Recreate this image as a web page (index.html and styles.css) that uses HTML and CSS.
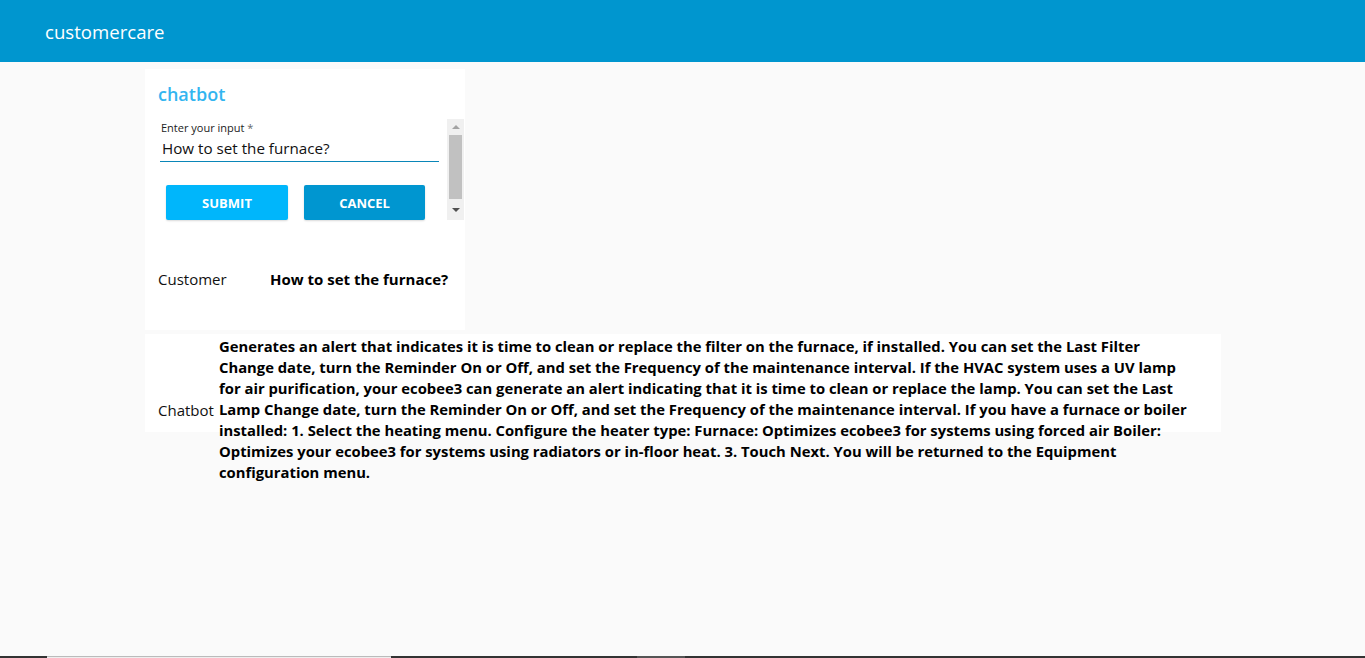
FILE: index.html
```html
<!DOCTYPE html>
<html lang="en">
<head>
<meta charset="utf-8">
<title>customercare</title>
<link rel="stylesheet" href="styles.css">
</head>
<body>
<header class="appbar"><span class="brand">customercare</span></header>
<main class="content">
  <section class="card">
    <h2 class="card-title">chatbot</h2>
    <div class="form-scroll">
      <div class="form-body">
        <label class="field-label">Enter your input <span class="req">*</span></label>
        <div class="field-input">How to set the furnace?</div>
        <div class="actions">
          <button class="btn btn-submit">SUBMIT</button>
          <button class="btn btn-cancel">CANCEL</button>
        </div>
      </div>
      <div class="scrollbar">
        <span class="arrow up"></span>
        <span class="thumb"></span>
        <span class="arrow down"></span>
      </div>
    </div>
    <div class="msg-row customer-row">
      <span class="who">Customer</span>
      <span class="msg">How to set the furnace?</span>
    </div>
  </section>
  <section class="bot-row">
    <div class="bot-inner">
      <span class="bot-who">Chatbot</span>
      <p class="bot-msg">Generates an alert that indicates it is time to clean or replace the filter on the furnace, if installed. You can set the Last Filter Change date, turn the Reminder On or Off, and set the Frequency of the maintenance interval. If the HVAC system uses a UV lamp for air purification, your ecobee3 can generate an alert indicating that it is time to clean or replace the lamp. You can set the Last Lamp Change date, turn the Reminder On or Off, and set the Frequency of the maintenance interval. If you have a furnace or boiler installed: 1. Select the heating menu. Configure the heater type: Furnace: Optimizes ecobee3 for systems using forced air Boiler: Optimizes your ecobee3 for systems using radiators or in-floor heat. 3. Touch Next. You will be returned to the Equipment configuration menu.</p>
    </div>
  </section>
</main>
<div class="screen-edge">
  <span class="seg dark s1"></span>
  <span class="seg light s2"></span>
  <span class="seg dark s3"></span>
  <span class="seg mid s4"></span>
  <span class="seg dark s5"></span>
</div>
</body>
</html>
```
FILE: styles.css
```css
* { box-sizing: border-box; }
html, body { margin: 0; padding: 0; }
body {
  background: #fafafa;
  font-family: "Open Sans", "Noto Sans", sans-serif;
  color: #000;
  height: 658px;
  overflow: hidden;
}
.appbar {
  height: 62px;
  background: #0096cf;
  display: flex;
  align-items: center;
  padding-left: 45px;
}
.brand {
  color: #fff;
  font-size: 18.6px;
  line-height: 22px;
  padding-top: 2px;
}
.content {
  padding: 7px 0 0 145px;
  display: flex;
  flex-direction: column;
  gap: 4px;
  align-items: flex-start;
}
.card {
  width: 320px;
  height: 261px;
  background: #fff;
  padding: 13px 0 0 0;
  display: flex;
  flex-direction: column;
}
.card-title {
  margin: 0 0 0 13px;
  font-size: 18px;
  line-height: 24px;
  font-weight: 600;
  color: #33b5f0;
}
.form-scroll {
  margin: 13px 0 0 15px;
  width: 304px;
  height: 101px;
  display: flex;
}
.form-body {
  flex: 1;
  padding-top: 2px;
}
.field-label {
  display: block;
  margin-left: 1px;
  font-size: 11px;
  line-height: 14px;
  color: #222;
}
.req { color: #666; }
.field-input {
  width: 279px;
  margin-top: 3px;
  padding-left: 2px;
  font-size: 15.2px;
  line-height: 20px;
  height: 24px;
  border-bottom: 1px solid #0a86b8;
  color: #111;
}
.actions {
  display: flex;
  gap: 16px;
  margin: 23px 0 0 6px;
}
.btn {
  height: 35px;
  border: 0;
  border-radius: 2px;
  color: #fff;
  font-family: inherit;
  font-weight: 700;
  font-size: 13px;
  letter-spacing: 0;
  box-shadow: 0 1px 2px rgba(0,0,0,0.15);
}
.btn-submit { width: 122px; background: #00b6fb; }
.btn-cancel { width: 121px; background: #0096d0; }
.scrollbar {
  width: 17px;
  background: #f0f0f0;
  display: flex;
  flex-direction: column;
  align-items: center;
}
.arrow {
  width: 0; height: 0;
  border-left: 4px solid transparent;
  border-right: 4px solid transparent;
}
.arrow.up { border-bottom: 4px solid #a3a3a3; margin: 6px 0 6px; }
.arrow.down { border-top: 4px solid #505050; margin: 9px 0 0; }
.thumb {
  width: 13px;
  height: 64px;
  background: #c1c1c1;
}
.msg-row {
  display: flex;
  align-items: center;
  margin: 49px 0 0 13px;
  height: 20px;
}
.who {
  width: 112px;
  font-size: 15px;
  color: #111;
}
.msg {
  font-size: 15px;
  font-weight: 700;
}
.bot-row {
  width: 1076px;
  height: 98px;
  background: #fff;
}
.bot-inner {
  display: flex;
  align-items: center;
  padding: 2px 0 0 13px;
}
.bot-who {
  width: 61px;
  flex: none;
  font-size: 15px;
  color: #111;
}
.bot-msg {
  margin: 0;
  width: 978px;
  font-size: 14.8px;
  line-height: 21px;
  font-weight: 700;
}
.screen-edge {
  position: fixed;
  left: 0; right: 0; bottom: 0;
  height: 2px;
  display: flex;
}
.seg { display: block; height: 2px; }
.dark { background: #333; }
.light { background: #eee; border-top: 1px solid #bbb; }
.mid { background: #555; }
.s1 { width: 47px; }
.s2 { width: 344px; }
.s3 { width: 246px; }
.s4 { width: 48px; }
.s5 { flex: 1; }
```
